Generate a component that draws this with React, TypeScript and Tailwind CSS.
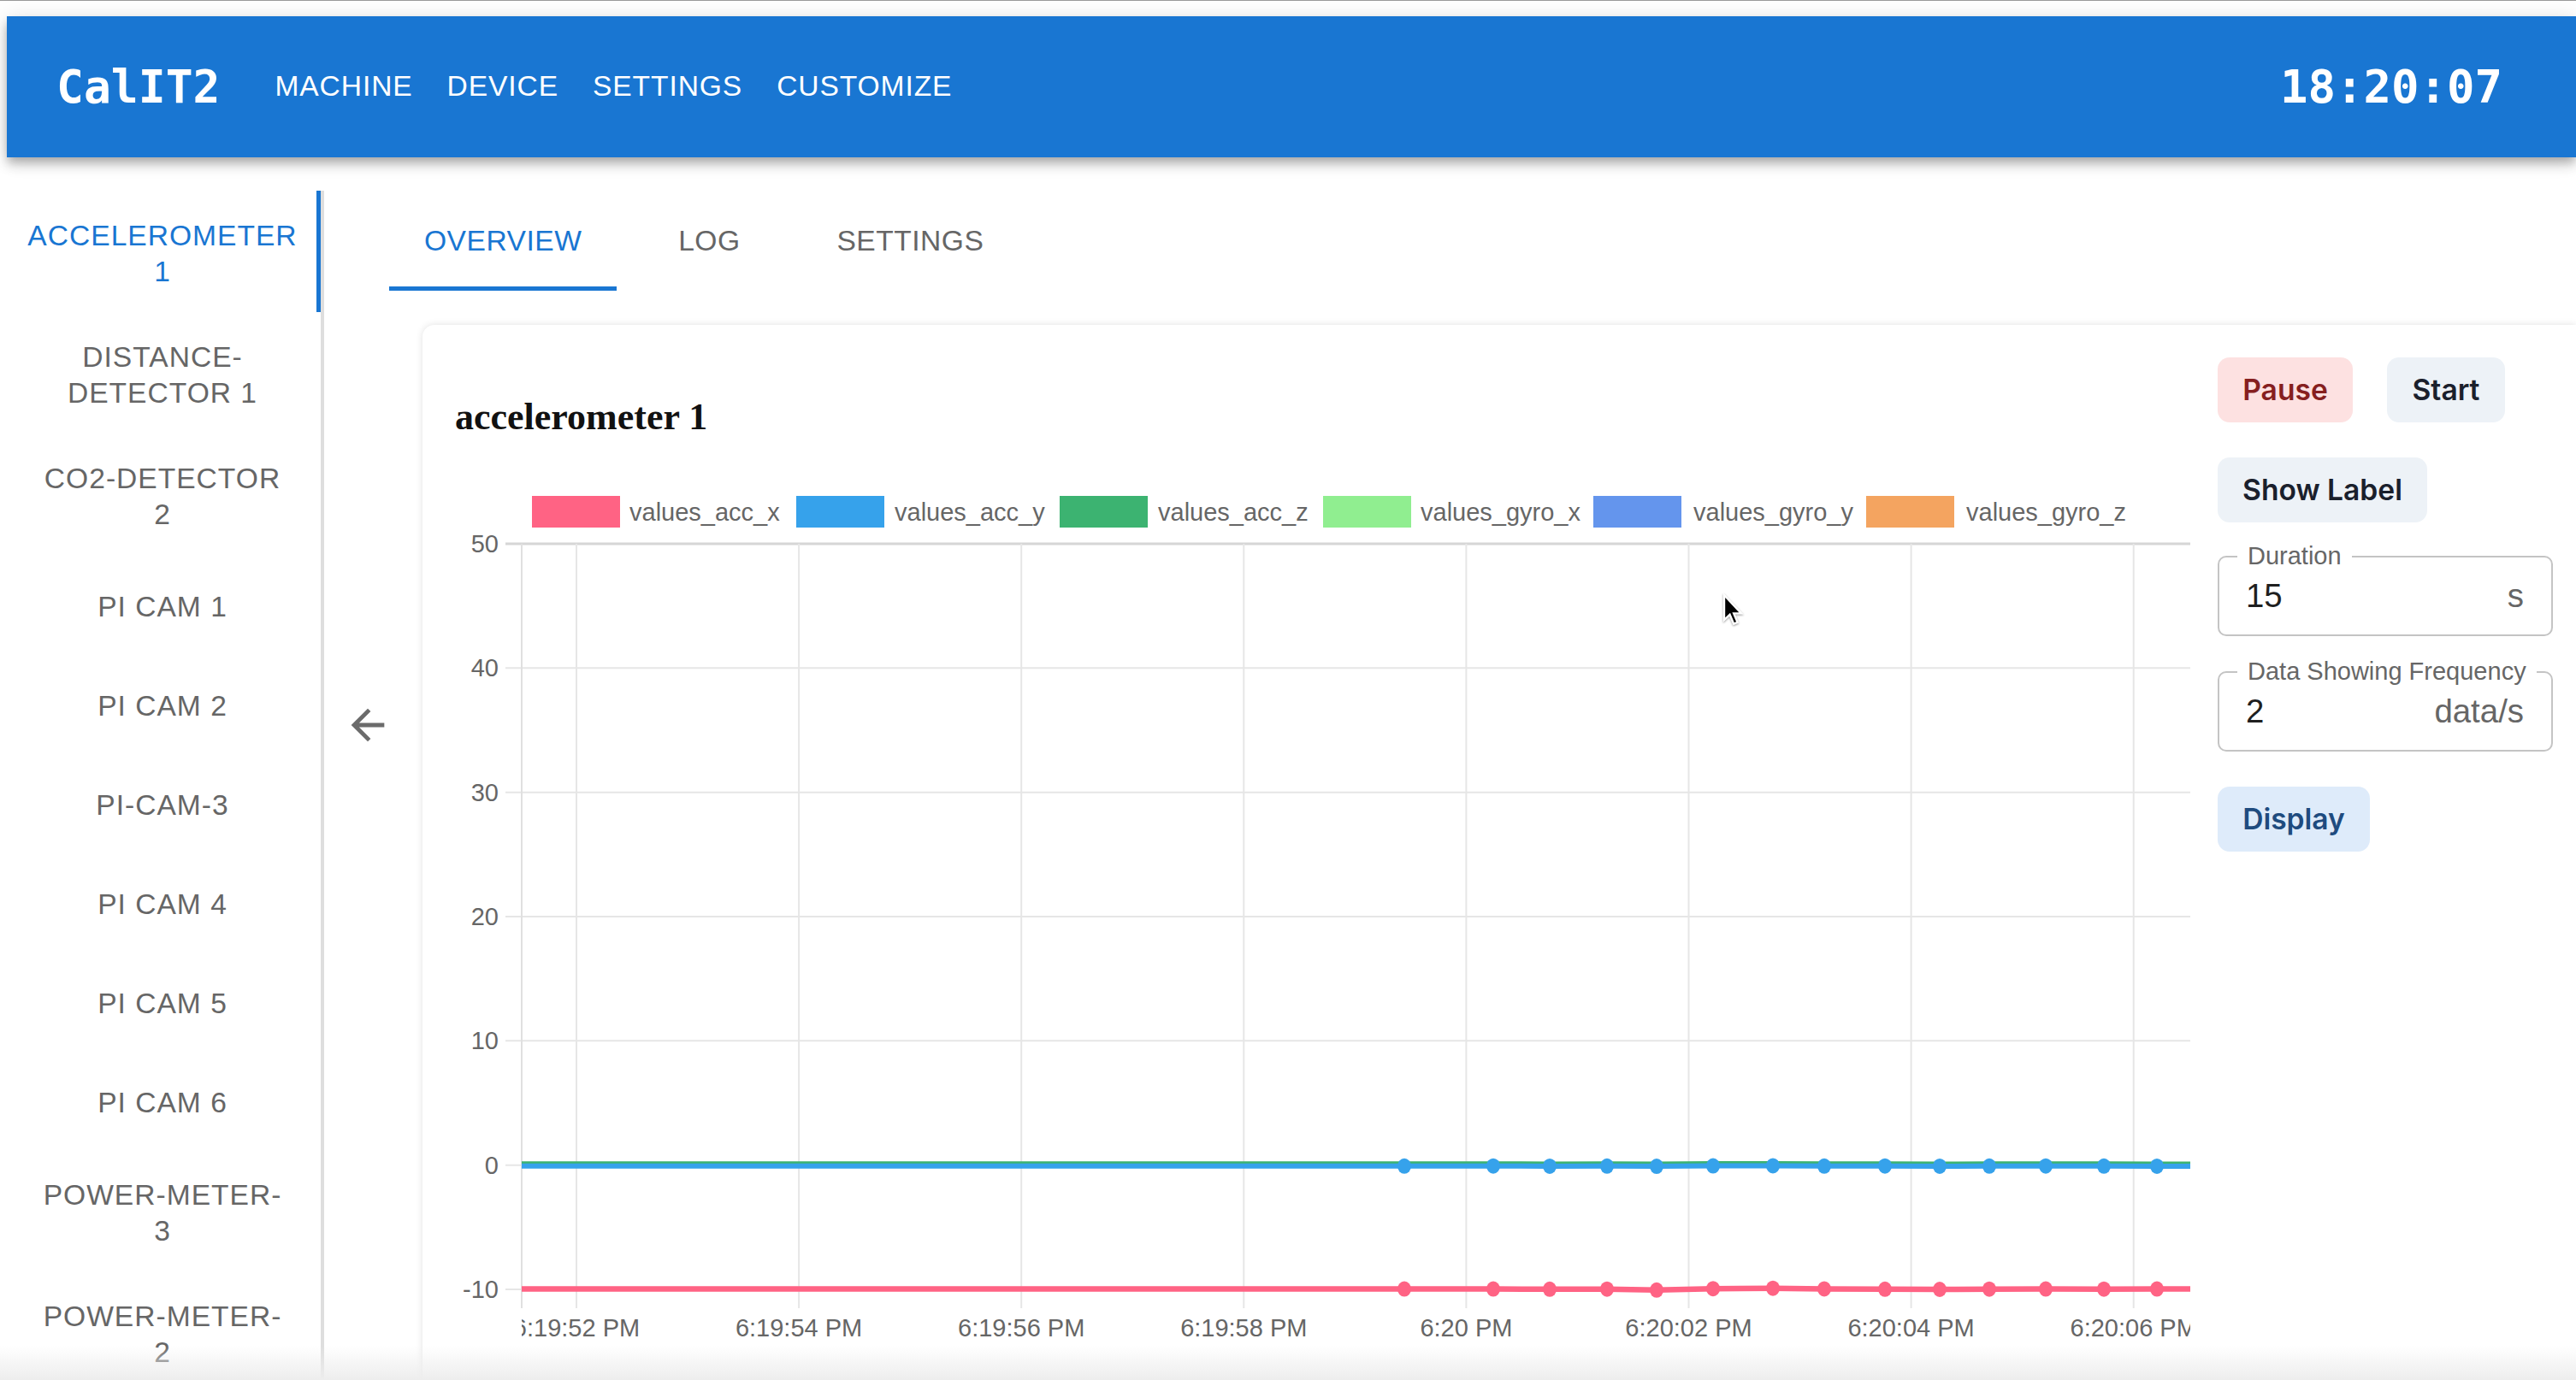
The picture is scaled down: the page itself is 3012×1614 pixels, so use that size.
import React from 'react'

const devices: { lines: string[]; active?: boolean }[] = [
  { lines: ['ACCELEROMETER', '1'], active: true },
  { lines: ['DISTANCE-', 'DETECTOR 1'] },
  { lines: ['CO2-DETECTOR', '2'] },
  { lines: ['PI CAM 1'] },
  { lines: ['PI CAM 2'] },
  { lines: ['PI-CAM-3'] },
  { lines: ['PI CAM 4'] },
  { lines: ['PI CAM 5'] },
  { lines: ['PI CAM 6'] },
  { lines: ['POWER-METER-', '3'] },
  { lines: ['POWER-METER-', '2'] },
]

const legend = [
  { name: 'values_acc_x', color: '#ff6384', box: 90, text: 204 },
  { name: 'values_acc_y', color: '#36a2eb', box: 399, text: 514 },
  { name: 'values_acc_z', color: '#3cb371', box: 707, text: 822 },
  { name: 'values_gyro_x', color: '#90ee90', box: 1015, text: 1129 },
  { name: 'values_gyro_y', color: '#6495ed', box: 1331, text: 1448 },
  { name: 'values_gyro_z', color: '#f4a460', box: 1650, text: 1767 },
]

const xTicks = [
  '6:19:52 PM',
  '6:19:54 PM',
  '6:19:56 PM',
  '6:19:58 PM',
  '6:20 PM',
  '6:20:02 PM',
  '6:20:04 PM',
  '6:20:06 PM',
]

const pointX = [1110, 1214, 1280, 1347, 1405, 1471, 1541, 1601, 1672, 1736, 1794, 1860, 1928, 1990]
const accX = [-9.97, -9.97, -9.99, -9.98, -10.06, -9.94, -9.91, -9.96, -9.99, -10.0, -9.98, -9.97, -9.98, -9.97]
const accY = [-0.08, -0.07, -0.09, -0.08, -0.1, -0.06, -0.05, -0.08, -0.07, -0.09, -0.08, -0.07, -0.08, -0.09]

// chart box is 2029 x 1020, plot area x 78..2029, y 76..948 (50 .. -10)
const yOf = (v: number) => 76 + (50 - v) * (872 / 60)

function linePath(values: number[], offset = 0) {
  const pts = [[60, values[0]], ...pointX.map((x, i) => [x, values[i]]), [2060, values[values.length - 1]]]
  return pts.map(([x, v], i) => `${i === 0 ? 'M' : 'L'}${x} ${yOf(v) + offset}`).join(' ')
}

function Chart() {
  const font = "'Liberation Sans', Arial, sans-serif"
  return (
    <svg width={2029} height={1020} viewBox="0 0 2029 1020" className="block">
      <defs>
        <clipPath id="plot">
          <rect x={78} y={60} width={1951} height={900} />
        </clipPath>
        <clipPath id="xlabels">
          <rect x={78} y={960} width={1951} height={60} />
        </clipPath>
      </defs>

      {legend.map((l) => (
        <g key={l.name}>
          <rect x={l.box} y={20} width={103} height={37} fill={l.color} />
          <text x={l.text} y={49} fontSize={29} fill="#666" fontFamily={font}>
            {l.name}
          </text>
        </g>
      ))}

      {[50, 40, 30, 20, 10, 0, -10].map((v) => (
        <g key={v}>
          <line x1={59} x2={2029} y1={yOf(v)} y2={yOf(v)} stroke={v === 50 ? '#d6d6d6' : '#e6e6e6'} strokeWidth={v === 50 ? 3 : 2} />
          <text x={51} y={yOf(v) + 10} textAnchor="end" fontSize={29} fill="#666" fontFamily={font}>
            {v}
          </text>
        </g>
      ))}

      <line x1={78} x2={78} y1={76} y2={970} stroke="#e0e0e0" strokeWidth={2} />
      {xTicks.map((t, i) => {
        const x = 142 + i * 260.1
        return <line key={t} x1={x} x2={x} y1={76} y2={970} stroke="#e6e6e6" strokeWidth={2} />
      })}

      <g clipPath="url(#xlabels)">
        {xTicks.map((t, i) => (
          <text key={t} x={142 + i * 260.1} y={1003} textAnchor="middle" fontSize={29} fill="#666" fontFamily={font}>
            {t}
          </text>
        ))}
      </g>

      <g clipPath="url(#plot)" fill="none" strokeLinejoin="round">
        <path d={linePath(accY, -2.5)} stroke="#3cb371" strokeWidth={6} />
        <path d={linePath(accY)} stroke="#36a2eb" strokeWidth={6} />
        <path d={linePath(accX)} stroke="#ff6384" strokeWidth={6.5} />
        {pointX.map((x, i) => (
          <ellipse key={'b' + x} cx={x} cy={yOf(accY[i])} rx={8} ry={9} fill="#36a2eb" />
        ))}
        {pointX.map((x, i) => (
          <ellipse key={'p' + x} cx={x} cy={yOf(accX[i])} rx={8} ry={9} fill="#ff6384" />
        ))}
      </g>
    </svg>
  )
}

function Field({ label, value, unit }: { label: string; value: string; unit: string }) {
  return (
    <div className="relative flex h-[94px] w-full items-center justify-between rounded-[10px] border-2 border-[#c4c4c4] pl-[31px] pr-[32px] text-[38.4px]">
      <span className="absolute left-[21px] top-[-18px] bg-white px-[12px] text-[29px] leading-[33px] text-[#666]">
        {label}
      </span>
      <span className="text-[#1f1f1f]">{value}</span>
      <span className="text-[#666]">{unit}</span>
    </div>
  )
}

export default function App() {
  return (
    <div className="relative h-[1614px] w-[3012px] overflow-hidden bg-white font-['Liberation_Sans',Arial,sans-serif]">
      <div className="h-px bg-[#9a9a9a]" />

      {/* app bar */}
      <div className="relative z-10 pl-[8px] pt-[18px]">
        <header className="flex h-[165px] items-center bg-[#1976d2] pl-[58px] pr-[86px] text-white shadow-[0_5px_10px_-2px_rgba(0,0,0,0.2),0_10px_12px_0_rgba(0,0,0,0.14),0_2px_24px_0_rgba(0,0,0,0.12)]">
          <div className="font-['DejaVu_Sans_Mono',monospace] text-[53px] font-bold">CalIT2</div>
          <nav className="ml-[44px] flex">
            {['MACHINE', 'DEVICE', 'SETTINGS', 'CUSTOMIZE'].map((n) => (
              <span key={n} className="px-[20px] text-[33.6px] tracking-[0.9px]">
                {n}
              </span>
            ))}
          </nav>
          <div className="ml-auto font-['DejaVu_Sans_Mono',monospace] text-[54px] font-bold">18:20:07</div>
        </header>
      </div>

      <div className="flex">
        {/* device list */}
        <aside className="relative mt-[39px] w-[379px] shrink-0 border-r-4 border-[#dedede]">
          <div className="absolute right-0 top-0 h-[142px] w-[5px] bg-[#1976d2]" />
          {devices.map((d) => (
            <div
              key={d.lines.join(' ')}
              className={`flex min-h-[116px] flex-col items-center justify-center pb-[26px] pl-[5px] pt-[32px] text-center text-[33.6px] leading-[42px] tracking-[1px] ${
                d.active ? 'text-[#1976d2]' : 'text-[#666]'
              }`}
            >
              {d.lines.map((l) => (
                <span key={l} className="whitespace-nowrap">
                  {l}
                </span>
              ))}
            </div>
          ))}
        </aside>

        <main className="flex-1 pt-[40px]">
          <div className="flex pl-[76px] text-[33.6px] tracking-[0.5px]">
            {['OVERVIEW', 'LOG', 'SETTINGS'].map((t, i) => (
              <div
                key={t}
                className={`relative flex h-[116px] min-w-[216px] items-center justify-center px-[41px] ${
                  i === 0 ? 'text-[#1976d2]' : 'text-[#666]'
                }`}
              >
                {t}
                {i === 0 && <div className="absolute bottom-0 left-0 right-0 h-[5px] bg-[#1976d2]" />}
              </div>
            ))}
          </div>

          <div className="mt-[40px] flex">
            <div className="pl-[22px]">
              <svg width={58} height={58} viewBox="0 0 24 24" className="mt-[439px]">
                <path d="M20 11H7.83l5.59-5.59L12 4l-8 8 8 8 1.41-1.41L7.83 13H20v-2z" fill="#6b6b6b" />
              </svg>
            </div>

            {/* card */}
            <section className="ml-[35px] flex h-[1300px] flex-1 rounded-tl-[14px] bg-white pl-[38px] pt-[38px] shadow-[0_0_8px_rgba(0,0,0,0.12)]">
              <div className="flex-1">
                <h2 className="mt-[45px] font-['Liberation_Serif',serif] text-[44px] font-bold leading-[50px] text-[#111]">
                  accelerometer 1
                </h2>
                <div className="mt-[47px]">
                  <Chart />
                </div>
              </div>

              <div className="ml-[32px] mr-[27px] flex w-[392px] shrink-0 flex-col font-['Inter',sans-serif] text-[33.6px] font-semibold">
                <div className="flex gap-[40px]">
                  <button className="flex h-[76px] w-[158px] items-center justify-center rounded-[14px] bg-[#fde1e1] text-[#861f1f]">
                    Pause
                  </button>
                  <button className="flex h-[76px] w-[138px] items-center justify-center rounded-[14px] bg-[#edf2f7] text-[#1a202c]">
                    Start
                  </button>
                </div>
                <button className="mt-[41px] flex h-[76px] w-[245px] items-center justify-center rounded-[14px] bg-[#edf2f7] text-[#1a202c]">
                  Show Label
                </button>
                <div className="mt-[39px] font-['Liberation_Sans',Arial,sans-serif] font-normal">
                  <Field label="Duration" value="15" unit="s" />
                </div>
                <div className="mt-[41px] font-['Liberation_Sans',Arial,sans-serif] font-normal">
                  <Field label="Data Showing Frequency" value="2" unit="data/s" />
                </div>
                <button className="mt-[41px] flex h-[76px] w-[178px] items-center justify-center rounded-[14px] bg-[#deebfa] text-[#1e4b7f]">
                  Display
                </button>
              </div>
            </section>
          </div>
        </main>
      </div>

      {/* mouse pointer */}
      <svg width={26} height={40} viewBox="0 0 13 20" className="absolute left-[2014px] top-[694px] drop-shadow-[0_1px_1px_rgba(0,0,0,0.4)]">
        <path d="M1 1 L1 15.5 L4.3 12.4 L6.6 17.8 L8.8 16.9 L6.6 11.7 L11 11.7 Z" fill="#000" stroke="#fff" strokeWidth={1.2} />
      </svg>

      <div className="pointer-events-none absolute inset-x-0 bottom-0 h-[40px] bg-linear-to-b from-white/0 to-[#ededed]" />
    </div>
  )
}
